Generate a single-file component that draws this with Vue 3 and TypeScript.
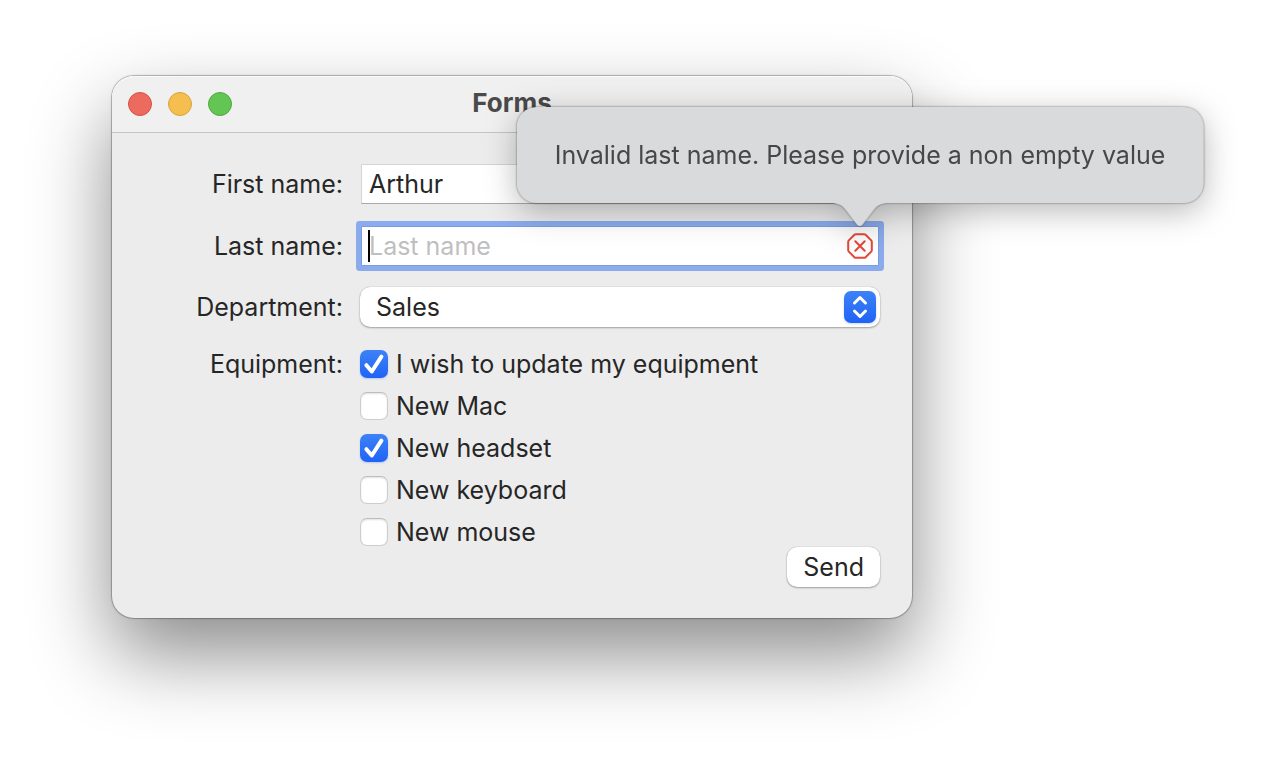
<script setup lang="ts">
import { ref } from 'vue'

interface Equipment {
  id: string
  label: string
  checked: boolean
}

const firstName = ref('Arthur')
const lastName = ref('')
const department = ref('Sales')
const equipment = ref<Equipment[]>([
  { id: 'update', label: 'I wish to update my equipment', checked: true },
  { id: 'mac', label: 'New Mac', checked: false },
  { id: 'headset', label: 'New headset', checked: true },
  { id: 'keyboard', label: 'New keyboard', checked: false },
  { id: 'mouse', label: 'New mouse', checked: false },
])
</script>

<template>
  <main class="desktop">
    <section class="window" aria-labelledby="window-title">
      <header class="titlebar">
        <div class="lights">
          <button class="light close" type="button" aria-label="Close"></button>
          <button class="light minimize" type="button" aria-label="Minimize"></button>
          <button class="light zoom" type="button" aria-label="Zoom"></button>
        </div>
        <h1 id="window-title" class="title">Forms</h1>
      </header>

      <form class="form" novalidate @submit.prevent>
        <div class="row">
          <label class="name" for="first">First name:</label>
          <div class="field">
            <input id="first" v-model="firstName" class="text" type="text" />
          </div>
        </div>

        <div class="row">
          <label class="name" for="last">Last name:</label>
          <div class="field">
            <input
              id="last"
              v-model="lastName"
              class="text focused"
              type="text"
              placeholder="Last name"
              aria-invalid="true"
              aria-describedby="last-error"
            />
            <span v-if="!lastName" class="caret"></span>
            <div class="error">
              <svg class="error-icon" viewBox="0 0 26 26" width="26" height="26" aria-hidden="true">
                <path d="M8.9 1.2h8.2q.9 0 1.5.6l5.6 5.600q.6.6.6 1.500v8.200q0 .9-.6 1.500l-5.600 5.600q-.6.600-1.500.600H8.900q-.9 0-1.500-.6L1.800 18.600q-.6-.6-.6-1.500V8.900q0-.9.600-1.500L7.400 1.800q.6-.6 1.500-.6Z" />
                <path d="m8.300 8.300 9.400 9.400M17.700 8.300l-9.400 9.400" />
              </svg>
              <div class="popover">
                <p id="last-error" class="message" role="alert">Invalid last name. Please provide a non empty value</p>
                <svg class="arrow" viewBox="0 0 60 25" width="60" height="25" aria-hidden="true">
                  <path d="M0 0V1C9 1 12 3 16 8L27 22.500Q30 25.500 33 22.500L44 8C48 3 51 1 60 1V0Z" />
                </svg>
              </div>
            </div>
          </div>
        </div>

        <div class="row">
          <label class="name" for="department">Department:</label>
          <div class="popup">
            <select id="department" v-model="department" class="select">
              <option>Sales</option>
            </select>
            <svg class="stepper" viewBox="0 0 32 32" width="32" height="32" aria-hidden="true">
              <defs>
                <linearGradient id="stepper-fill" x1="0" y1="0" x2="0" y2="1">
                  <stop offset="0" stop-color="#3d82f7" />
                  <stop offset="1" stop-color="#2063f5" />
                </linearGradient>
              </defs>
              <rect width="32" height="32" rx="7" fill="url(#stepper-fill)" />
              <path d="m10.500 12 5.500-5.500 5.500 5.500M10.500 20l5.500 5.500 5.500-5.500" />
            </svg>
          </div>
        </div>

        <div class="row options" role="group" aria-labelledby="equipment-name">
          <span id="equipment-name" class="name">Equipment:</span>
          <div class="checks">
            <label v-for="item in equipment" :key="item.id" class="check" :for="item.id">
              <span class="box">
                <input :id="item.id" v-model="item.checked" class="tick" type="checkbox" />
                <svg v-if="item.checked" class="mark" viewBox="0 0 28 28" width="28" height="28" aria-hidden="true">
                  <path d="m6.400 15.200 5.400 6.300L21.400 6.700" />
                </svg>
              </span>
              <span>{{ item.label }}</span>
            </label>
          </div>
        </div>

        <button class="send" type="submit">Send</button>
      </form>
    </section>
  </main>
</template>

<style>
body {
  margin: 0;
  background: #fff;
}
</style>

<style scoped>
.desktop {
  box-sizing: border-box;
  min-height: 100vh;
  padding: 76px 362px 76px 112px;
  overflow: hidden;
  font: 25px/30px Inter, sans-serif;
  color: #262626;
}

.window {
  min-width: 720px;
  border-radius: 22px;
  background: #ececec;
  box-shadow:
    0 0 0 1px rgba(0, 0, 0, 0.2),
    0 0 3px rgba(0, 0, 0, 0.2),
    0 36px 80px rgba(0, 0, 0, 0.46);
}

.titlebar {
  display: grid;
  grid-template-columns: 1fr auto 1fr;
  align-items: center;
  box-sizing: border-box;
  height: 57px;
  padding: 0 16px;
  border-bottom: 1px solid #c4c4c4;
  border-radius: 22px 22px 0 0;
  background: #f0f0f0;
  box-shadow: inset 0 1px #fafafa;
}

.lights {
  display: flex;
  gap: 16px;
}

.light {
  width: 24px;
  height: 24px;
  padding: 0;
  border: 1px solid;
  border-radius: 50%;
}

.close {
  border-color: #d65046;
  background: #ed6a5e;
}

.minimize {
  border-color: #d9a23c;
  background: #f5bf4f;
}

.zoom {
  border-color: #51a73e;
  background: #62c554;
}

.title {
  margin: 0;
  padding-bottom: 2px;
  font-size: 26px;
  line-height: 30px;
  font-weight: 700;
  color: #4a4a4a;
}

.form {
  display: flex;
  flex-direction: column;
  gap: 21px;
  padding: 31px 32px 31px 0;
}

.row {
  display: grid;
  grid-template-columns: 231px 1fr;
  column-gap: 17px;
  align-items: center;
}

.row:first-child {
  margin-bottom: 1px;
}

.name {
  text-align: right;
}

.text {
  display: block;
  box-sizing: border-box;
  width: 100%;
  height: 40px;
  margin: 0;
  padding: 0 7px;
  border: 1px solid #d5d5d5;
  border-bottom-color: #a9a9a9;
  border-radius: 0;
  outline: none;
  background: #fff;
  font: inherit;
  color: inherit;
}

.focused {
  padding-right: 40px;
  border: 1px solid #7a9de2;
  box-shadow: 0 0 0 5px #8aabec;
  border-radius: 1px;
  caret-color: transparent;
}

.focused::placeholder {
  color: #bfbfbf;
  opacity: 1;
}

.field {
  position: relative;
  margin: 0 1px;
}

.caret {
  position: absolute;
  top: 4px;
  left: 7px;
  width: 2px;
  height: 32px;
  background: #000;
}

.error {
  position: absolute;
  top: 7px;
  right: 6px;
  width: 26px;
  height: 26px;
}

.error-icon {
  display: block;
  fill: none;
  stroke: #e8473b;
  stroke-width: 2;
  stroke-linecap: round;
}

.popover {
  position: absolute;
  bottom: 56px;
  left: 50%;
  z-index: 1;
  padding: 33px 38px;
  border-radius: 20px;
  background: #d9dadc;
  transform: translateX(-50%);
  filter: drop-shadow(0 0 1px rgba(0, 0, 0, 0.5)) drop-shadow(0 8px 16px rgba(0, 0, 0, 0.28));
}

.message {
  margin: 0;
  white-space: nowrap;
  color: #464748;
}

.arrow {
  position: absolute;
  top: calc(100% - 1px);
  left: calc(50% - 30px);
  fill: #d9dadc;
}

.popup {
  position: relative;
}

.select {
  display: block;
  width: 100%;
  height: 40px;
  margin: 0;
  padding: 0 44px 0 16px;
  border: 0;
  border-radius: 10px;
  appearance: none;
  background: #fff;
  box-shadow: 0 0 1px rgba(0, 0, 0, 0.35), 0 1px 2px rgba(0, 0, 0, 0.3);
  font: inherit;
  color: inherit;
}

.stepper {
  position: absolute;
  top: 4px;
  right: 4px;
  pointer-events: none;
  filter: drop-shadow(0 1px 1px rgba(32, 99, 245, 0.25));
}

.stepper path {
  fill: none;
  stroke: #fff;
  stroke-width: 3;
  stroke-linecap: round;
  stroke-linejoin: round;
}

.options {
  align-items: start;
}

.options .name {
  padding-top: 1px;
}

.checks {
  display: flex;
  flex-direction: column;
  align-items: flex-start;
  gap: 14px;
  padding-top: 2px;
}

.check {
  display: flex;
  align-items: center;
  gap: 8px;
  height: 28px;
}

.box {
  display: grid;
}

.tick,
.mark {
  grid-area: 1 / 1;
}

.tick {
  width: 28px;
  height: 28px;
  margin: 0;
  border: 1px solid #cdcdcd;
  border-top-color: #bdbdbd;
  border-radius: 7px;
  appearance: none;
  background: #fff;
  box-shadow: inset 0 1px 2px rgba(0, 0, 0, 0.12);
}

.tick:checked {
  border: 0;
  background: linear-gradient(#3d82f7, #2063f5);
  box-shadow: 0 1px 2px rgba(32, 99, 245, 0.25);
}

.mark {
  pointer-events: none;
  fill: none;
  stroke: #fff;
  stroke-width: 4;
  stroke-linecap: round;
  stroke-linejoin: round;
}

.send {
  align-self: flex-end;
  height: 40px;
  margin-top: -20px;
  padding: 0 16px;
  border: 0;
  border-radius: 10px;
  background: #fff;
  box-shadow: 0 0 1px rgba(0, 0, 0, 0.35), 0 1px 2px rgba(0, 0, 0, 0.3);
  font: inherit;
  color: inherit;
}
</style>
